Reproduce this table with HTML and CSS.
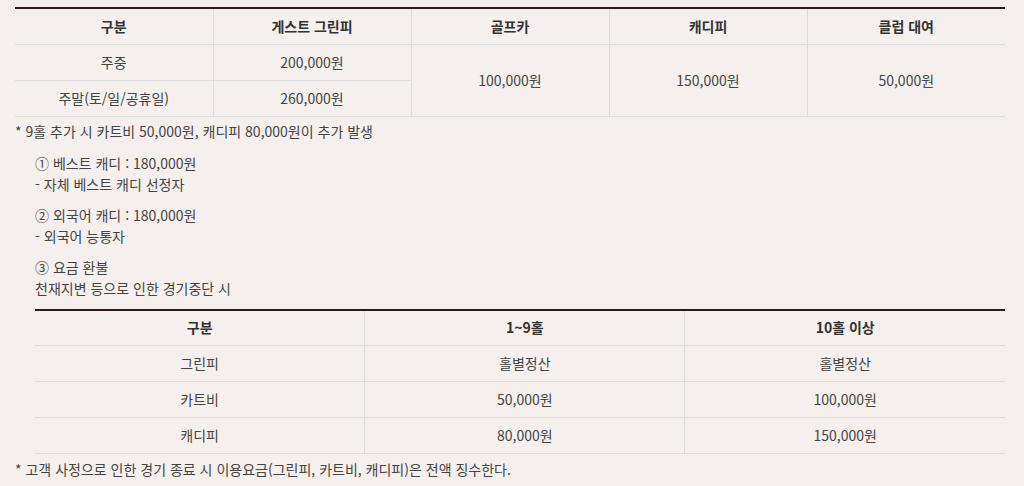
FILE: index.html
```html
<!DOCTYPE html>
<html lang="ko">
<head>
    <meta charset="UTF-8">
    <meta name="viewport" content="width=device-width, initial-scale=1.0">
    <title>이용요금</title>
    <link rel="stylesheet" href="styles.css">
</head>
<body>
    <div class="container">
        <table class="fee_table">
            <colgroup>
                <col style="width: 20%">
                <col style="width: 20%">
                <col style="width: 20%">
                <col style="width: 20%">
                <col style="width: 20%">
            </colgroup>
            <thead>
                <tr>
                    <th>구분</th>
                    <th>게스트 그린피</th>
                    <th>골프카</th>
                    <th>캐디피</th>
                    <th>클럽 대여</th>
                </tr>
            </thead>
            <tbody>
                <tr>
                    <td>주중</td>
                    <td>200,000원</td>
                    <td rowspan="2">100,000원</td>
                    <td rowspan="2">150,000원</td>
                    <td rowspan="2">50,000원</td>
                </tr>
                <tr>
                    <td>주말(토/일/공휴일)</td>
                    <td>260,000원</td>
                </tr>
            </tbody>
        </table>

        <p class="note">* 9홀 추가 시 카트비 50,000원, 캐디피 80,000원이 추가 발생</p>

        <div class="sub_box">
            <p>① 베스트 캐디 : 180,000원<br>- 자체 베스트 캐디 선정자</p>
            <p>② 외국어 캐디 : 180,000원<br>- 외국어 능통자</p>
            <p>③ 요금 환불<br>천재지변 등으로 인한 경기중단 시</p>

            <table class="fee_table">
                <colgroup>
                    <col style="width: 34%">
                    <col style="width: 33%">
                    <col style="width: 33%">
                </colgroup>
                <thead>
                    <tr>
                        <th>구분</th>
                        <th>1~9홀</th>
                        <th>10홀 이상</th>
                    </tr>
                </thead>
                <tbody>
                    <tr>
                        <td>그린피</td>
                        <td>홀별정산</td>
                        <td>홀별정산</td>
                    </tr>
                    <tr>
                        <td>카트비</td>
                        <td>50,000원</td>
                        <td>100,000원</td>
                    </tr>
                    <tr>
                        <td>캐디피</td>
                        <td>80,000원</td>
                        <td>150,000원</td>
                    </tr>
                </tbody>
            </table>
        </div>

        <p class="note last">* 고객 사정으로 인한 경기 종료 시 이용요금(그린피, 카트비, 캐디피)은 전액 징수한다.</p>
    </div>
</body>
</html>
```

FILE: styles.css
```css
*, *:after, *:before {
    box-sizing: border-box;
}

body {
    font-family: "Noto Sans CJK KR", "Noto Sans", sans-serif;
    font-size: 14px;
    line-height: 21px;
    margin: 0;
    background: #f5f0ed;
    color: #444;
}

.container {
    width: 990px;
    margin: 0 0 0 15px;
    padding-top: 7px;
}

.fee_table {
    width: 100%;
    border-collapse: collapse;
    table-layout: fixed;
    border-top: 2px solid #2b1a14;
}

.fee_table th,
.fee_table td {
    height: 36px;
    padding: 0;
    text-align: center;
    vertical-align: middle;
    border-bottom: 1px solid #ddd;
    border-right: 1px solid #ddd;
    font-size: 14px;
}

.fee_table th:last-child,
.fee_table tr:first-child td:last-child {
    border-right: 0;
}

.fee_table th {
    font-weight: 700;
    color: #333;
}

.note {
    margin: 4px 0 0;
}

.note.last {
    margin-top: 5px;
}

.sub_box {
    padding-left: 20px;
    margin-top: 11px;
}

.sub_box p {
    margin: 0 0 10px;
}

.sub_box .fee_table {
    margin-top: 0;
}

.sub_box .fee_table td:last-child {
    border-right: 0;
}
```
